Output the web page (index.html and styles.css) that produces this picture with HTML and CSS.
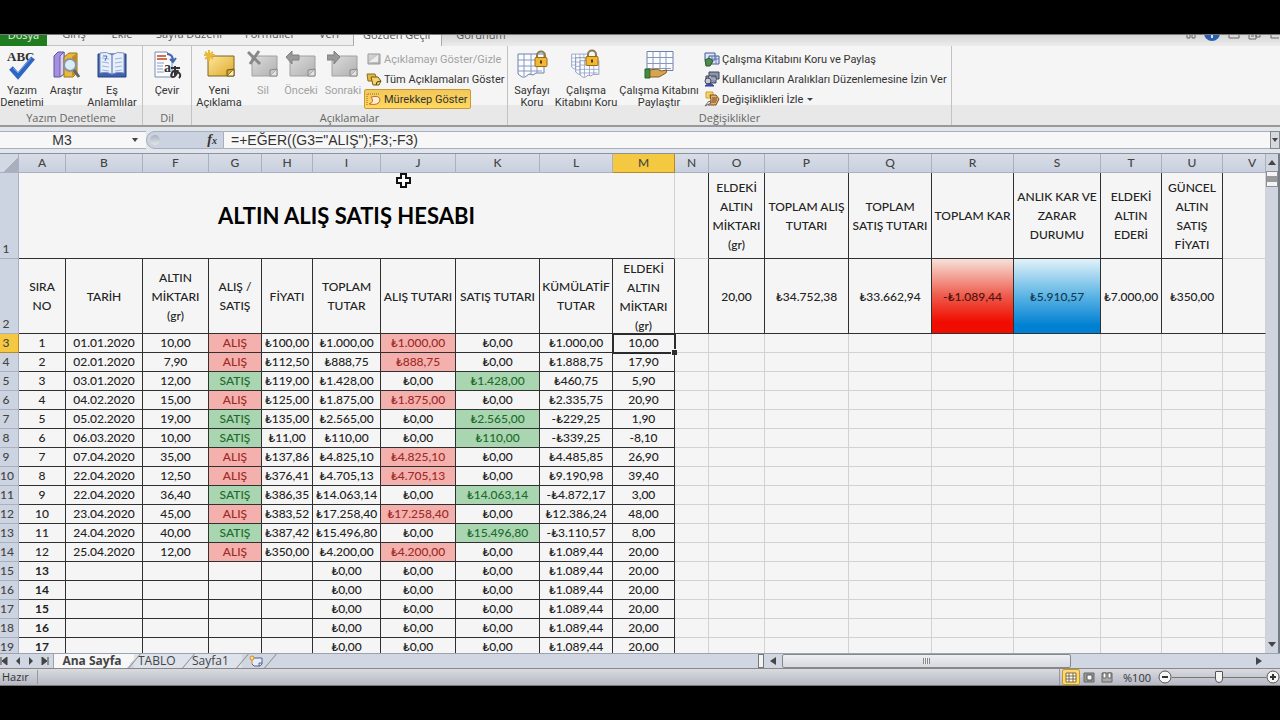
FILE: index.html
```html
<!DOCTYPE html>
<html lang="tr">
<head>
<meta charset="utf-8">
<title>Altın Alış Satış Hesabı</title>
<link rel="stylesheet" href="styles.css">
</head>
<body>
<svg class="defs" aria-hidden="true">
  <defs>
    <linearGradient id="note" x1="0" y1="0" x2="1" y2="1"><stop offset="0" stop-color="#ffe79a"/><stop offset="1" stop-color="#dba92c"/></linearGradient>
    <linearGradient id="grey" x1="0" y1="0" x2="1" y2="1"><stop offset="0" stop-color="#dcdcdc"/><stop offset="1" stop-color="#b0b0b0"/></linearGradient>
    <symbol id="greynote" viewBox="0 0 32 32"><path d="M5 7h25v20H5z" fill="url(#grey)" stroke="#a0a0a0"/><path d="M30 20l-7 7h7z" fill="#e4e4e4" stroke="#888"/><path d="M23 27v-6l7-1" fill="#c9c9c9" stroke="#888"/></symbol>
    <symbol id="grid" viewBox="0 0 28 25"><path d="M1 1h26v19h-8l-3 2-4-1-4 3H5l-4-3z" fill="#fbfcff" stroke="#6f80a8"/><path d="M1 7h26M1 13h26M1 18h24M7 1v22M14 1v20M20 1v19" stroke="#8798bd" fill="none"/></symbol>
    <symbol id="lock" viewBox="0 0 14 17"><path d="M3 8V5a4 4 0 0 1 8 0v3" fill="none" stroke="#8a7b52" stroke-width="2"/><rect x="1" y="7" width="12" height="9" rx="1" fill="#f2b834" stroke="#9b6b10"/><path d="M7 10v3" stroke="#56390a" stroke-width="2"/></symbol>
  </defs>
</svg>
<div class="app">
  <nav class="tabs">
    <button class="tab file">Dosya</button>
    <div class="plain">
      <button class="tab w54">Giriş</button>
      <button class="tab w42">Ekle</button>
      <button class="tab w92">Sayfa Düzeni</button>
      <button class="tab w70">Formüller</button>
      <button class="tab w48">Veri</button>
    </div>
    <button class="tab active">Gözden Geçir</button>
    <button class="tab last">Görünüm</button>
    <svg class="winicons" width="96" height="12" viewBox="0 0 96 12"><path d="M3 0v4h3V1M11 0v4H8V1" fill="none" stroke="#666"/><circle cx="28" cy="-1" r="8" fill="#2a5fae"/><path d="M28 0v4" stroke="#cfe2ff" stroke-width="2"/><path d="M45 0v4h10V0M65 0v5h7V0M72 0v3h4V0M67 2h3M87 0v4h8" fill="none" stroke="#666" stroke-width="1"/></svg>
  </nav>

  <section class="ribbon">
    <div class="group g1">
      <div class="tools">
        <button class="big"><svg width="32" height="32" viewBox="0 0 32 32"><text x="1" y="12" class="abc">ABC</text><path d="M5 19l7 8L27 9" fill="none" stroke="#2f66c4" stroke-width="5"/><path d="M7 19l5 5L25 9" fill="none" stroke="#6e9fe8" stroke-width="1"/></svg><span>Yazım<br>Denetimi</span></button>
        <button class="big"><svg width="32" height="32" viewBox="0 0 32 32"><path d="M4 7l4-4h6v22l-4 3H4z" fill="#a48fe0" stroke="#5f55a0"/><path d="M10 7l4-4v22l-4 3z" fill="#d9d0f4" stroke="#6a5fae"/><path d="M14 8l5-4h8v20l-4 4h-9z" fill="#e6b93e" stroke="#9a7415"/><path d="M22 8l5-4v20l-5 3z" fill="#c28d1f"/><circle cx="20" cy="16" r="6" fill="#d9edf8" stroke="#8b949e" stroke-width="2"/><path d="M24 21l5 7" stroke="#666" stroke-width="3"/></svg><span>Araştır</span></button>
        <button class="big"><svg width="32" height="32" viewBox="0 0 32 32"><path d="M2 5h28v23H2z" fill="#3f62ad" stroke="#263f7d"/><path d="M4 4q7-2 12 2v19q-6-3-12-1zM28 4q-7-2-12 2v19q6-3 12-1z" fill="#e9f0fb" stroke="#7b92c5"/><path d="M6 9l7 1M6 13l7 1M6 17l7 1M6 21l7 1M19 10l7-1M19 14l7-1M19 18l7-1M19 22l7-1" stroke="#9bb3dd"/><path d="M7 7h4l-2 5" fill="none" stroke="#506fb4"/></svg><span>Eş<br>Anlamlılar</span></button>
      </div>
      <h2>Yazım Denetleme</h2>
    </div>
    <div class="group g2">
      <div class="tools">
        <button class="big"><svg width="32" height="32" viewBox="0 0 32 32"><path d="M4 3h12l5 5v20H4z" fill="#fafbff" stroke="#7d8cae"/><path d="M6 7h9M6 10h10" stroke="#d1714e" stroke-width="2"/><path d="M6 14h7M6 17h6M6 20h6M6 23h7" stroke="#8c9cc0"/><path d="M16 5q6 0 6 7M19 10l3 3 3-4" fill="none" stroke="#4268b4" stroke-width="2"/><text x="13" y="23" class="tr">a</text><path d="M20 19h9M24 17v10M27 21q-2 7-5 7t-1-4 6-1 1 6" fill="none" stroke="#333" stroke-width="2"/></svg><span>Çevir</span></button>
      </div>
      <h2>Dil</h2>
    </div>
    <div class="group g3">
      <div class="tools">
        <button class="big wide"><svg width="32" height="32" viewBox="0 0 32 32"><path d="M5 7h26v20H5z" fill="url(#note)" stroke="#7d6420"/><path d="M31 20l-7 7h7z" fill="#fff1ba" stroke="#6d5415"/><path d="M24 27v-6l7-1" fill="#d3a239" stroke="#6d5415"/><path d="M6 1v11M1 6h11M2 3l8 7M10 3l-8 7" stroke="#e9b93a" stroke-width="2"/></svg><span>Yeni<br>Açıklama</span></button>
        <button class="big off w34" disabled><svg width="32" height="32" viewBox="0 0 32 32"><use href="#greynote" width="32" height="32"/><path d="M1 3l12 12M12 2L3 15" stroke="#888" stroke-width="3"/></svg><span>Sil</span></button>
        <button class="big off w42" disabled><svg width="32" height="32" viewBox="0 0 32 32"><use href="#greynote" width="32" height="32"/><path d="M1 8l6-6v4h7v5H7v4z" fill="#999" stroke="#808080"/></svg><span>Önceki</span></button>
        <button class="big off w42" disabled><svg width="32" height="32" viewBox="0 0 32 32"><use href="#greynote" width="32" height="32"/><path d="M13 8L7 2v4H0v5h7v4z" fill="#999" stroke="#808080"/></svg><span>Sonraki</span></button>
        <div class="stack">
          <button class="small off" disabled><svg width="16" height="16" viewBox="0 0 16 16"><path d="M2 3h12v10H2z" fill="url(#grey)" stroke="#999"/><path d="M3 11L12 4v7z" fill="#eee"/></svg>Açıklamayı Göster/Gizle</button>
          <button class="small"><svg width="16" height="16" viewBox="0 0 16 16"><path d="M1 3h8l2 5-3 2H2z" fill="#e5ba43" stroke="#8a6d1d"/><path d="M5 6h7l3 4-2 4H7z" fill="#f4d36c" stroke="#755b16"/><path d="M15 10l-4 1-1 3" fill="none" stroke="#4c3c10"/></svg>Tüm Açıklamaları Göster</button>
          <button class="small pressed"><svg width="16" height="16" viewBox="0 0 16 16"><path d="M1 14V3h13" fill="none" stroke="#8a6a25" stroke-dasharray="1 1"/><path d="M5 6q9-2 9 3-1 6-11 4 6-2 2-7z" fill="#fff0cf" stroke="#c06a31"/></svg>Mürekkep Göster</button>
        </div>
      </div>
      <h2>Açıklamalar</h2>
    </div>
    <div class="group g4">
      <div class="tools">
        <button class="big w48"><svg width="32" height="32" viewBox="0 0 32 32"><use href="#grid" x="1" y="4" width="28" height="25"/><use href="#lock" x="18" y="1" width="14" height="18"/></svg><span>Sayfayı<br>Koru</span></button>
        <button class="big w60"><svg width="32" height="32" viewBox="0 0 32 32"><use href="#grid" x="1" y="4" width="18" height="17"/><use href="#grid" x="5" y="8" width="20" height="18"/><use href="#grid" x="9" y="11" width="21" height="18"/><use href="#lock" x="15" y="0" width="14" height="18"/></svg><span>Çalışma<br>Kitabını Koru</span></button>
        <button class="big w86"><svg width="32" height="32" viewBox="0 0 32 32"><use href="#grid" x="3" y="1" width="28" height="26"/><path d="M2 20h5v9H2z" fill="#3e8e3b" stroke="#27632a"/><path d="M7 21l7-1 4 2 6-1-1 3-7 4H7z" fill="#d7a54f" stroke="#815f24"/></svg><span>Çalışma Kitabını<br>Paylaştır</span></button>
        <div class="stack">
          <button class="small"><svg width="16" height="16" viewBox="0 0 16 16"><path d="M1 2h10v7H1zM5 5h10v8H5z" fill="#dbe6fa" stroke="#455d91"/><path d="M5 8h10M8 5v8M12 5v8" stroke="#6c82b5"/><path d="M1 9l4-2 4 3-3 5H2z" fill="#4b8b4b" stroke="#285a2b"/></svg>Çalışma Kitabını Koru ve Paylaş</button>
          <button class="small"><svg width="16" height="16" viewBox="0 0 16 16"><path d="M5 1h10v7H5zM2 5h10v7H2z" fill="#8c95ac" stroke="#3d4558"/><path d="M2 8h10M6 5v7" stroke="#dfe4f0"/><circle cx="4" cy="10" r="3" fill="#c8c8d4" stroke="#445"/><path d="M1 15q5-5 9 0z" fill="#4356b5" stroke="#2e3b87"/></svg>Kullanıcıların Aralıkları Düzenlemesine İzin Ver</button>
          <button class="small"><svg width="16" height="16" viewBox="0 0 16 16"><path d="M2 1h7v6H2z" fill="#f5d465" stroke="#d29f2e"/><path d="M6 4h6l3 4-3 6H4l3-5z" fill="#e7b06c" stroke="#7a4c22"/><path d="M8 7h5M8 9h5M7 11h5" stroke="#704522"/><path d="M1 15l4-5 2 2z" fill="#fff" stroke="#666"/></svg>Değişiklikleri İzle<i class="caret"></i></button>
        </div>
      </div>
      <h2>Değişiklikler</h2>
    </div>
  </section>

  <section class="formula">
    <div class="namebox"><input type="text" value="M3" aria-label="Ad kutusu"><button aria-label="Adlar"><i class="caret"></i></button></div>
    <div class="fx"><span class="knob"></span><button aria-label="İşlev ekle">f<small>x</small></button></div>
    <input class="expr" type="text" aria-label="Formül" value="=+EĞER((G3=&quot;ALIŞ&quot;);F3;-F3)">
    <button class="expand" aria-label="Genişlet"><i class="caret"></i></button>
  </section>

  <main class="sheet">
    <div class="viewport">
      <table>
        <colgroup>
          <col class="c-num"><col class="c-a"><col class="c-b"><col class="c-f"><col class="c-g"><col class="c-h"><col class="c-i"><col class="c-j"><col class="c-k"><col class="c-l"><col class="c-m"><col class="c-n"><col class="c-o"><col class="c-p"><col class="c-q"><col class="c-r"><col class="c-s"><col class="c-t"><col class="c-u"><col>
        </colgroup>
        <thead>
          <tr><th class="corner"></th><th>A</th><th>B</th><th>F</th><th>G</th><th>H</th><th>I</th><th>J</th><th>K</th><th>L</th><th class="sel">M</th><th>N</th><th>O</th><th>P</th><th>Q</th><th>R</th><th>S</th><th>T</th><th>U</th><th class="v">V</th></tr>
        </thead>
        <tbody id="rows">
          <tr class="r1"><th>1</th><td colspan="10" class="title">ALTIN ALIŞ SATIŞ HESABI</td><td class="gap"></td><td class="k">ELDEKİ<br>ALTIN<br>MİKTARI<br>(gr)</td><td class="k">TOPLAM ALIŞ<br>TUTARI</td><td class="k">TOPLAM<br>SATIŞ TUTARI</td><td class="k">TOPLAM KAR</td><td class="k">ANLIK KAR VE<br>ZARAR<br>DURUMU</td><td class="k">ELDEKİ<br>ALTIN<br>EDERİ</td><td class="k">GÜNCEL<br>ALTIN<br>SATIŞ<br>FİYATI</td><td></td></tr>
          <tr class="r2"><th>2</th><td class="k">SIRA<br>NO</td><td class="k">TARİH</td><td class="k">ALTIN<br>MİKTARI<br>(gr)</td><td class="k">ALIŞ /<br>SATIŞ</td><td class="k">FİYATI</td><td class="k">TOPLAM<br>TUTAR</td><td class="k">ALIŞ TUTARI</td><td class="k">SATIŞ TUTARI</td><td class="k">KÜMÜLATİF<br>TUTAR</td><td class="k"><div>ELDEKİ<br>ALTIN<br>MİKTARI<br>(gr)</div></td><td class="gap"></td><td class="k">20,00</td><td class="k">₺34.752,38</td><td class="k">₺33.662,94</td><td class="k loss">-₺1.089,44</td><td class="k gain">₺5.910,57</td><td class="k">₺7.000,00</td><td class="k">₺350,00</td><td></td></tr>
        </tbody>
      </table>
      <svg class="cursor" width="16" height="16" viewBox="0 0 16 16"><path d="M5 1h5v4h4v5h-4v4H5v-4H1V5h4z" fill="#fff" stroke="#111" stroke-width="2"/></svg>
    </div>
    <div class="vscroll"><i class="up"></i><span class="vthumb"></span><i class="down"></i></div>
  </main>

  <footer>
    <div class="sheetbar">
      <div class="navs">
        <button aria-label="İlk sayfa"><svg width="8" height="8" viewBox="0 0 8 8"><path d="M1 0v8M7 0v8L2 4z" fill="#444" stroke="#444" stroke-width="1"/></svg></button>
        <button aria-label="Önceki sayfa"><svg width="8" height="8" viewBox="0 0 8 8"><path d="M6 0v8L2 4z" fill="#444"/></svg></button>
        <button aria-label="Sonraki sayfa"><svg width="8" height="8" viewBox="0 0 8 8"><path d="M2 0v8l4-4z" fill="#444"/></svg></button>
        <button aria-label="Son sayfa"><svg width="8" height="8" viewBox="0 0 8 8"><path d="M1 0v8l5-4zM7 0v8" fill="#444" stroke="#444" stroke-width="1"/></svg></button>
      </div>
      <button class="st current">Ana Sayfa</button>
      <button class="st t2">TABLO</button>
      <button class="st t2">Sayfa1</button>
      <button class="st add" aria-label="Sayfa ekle"><svg width="16" height="12" viewBox="0 0 16 12"><path d="M4 3h10v6l-2 2H6l-2-2" fill="#e9eefb" stroke="#4d6191"/><path d="M14 8h-3v3" fill="none" stroke="#4d6191"/><circle cx="4" cy="3" r="2" fill="#ffe7a3" stroke="#d08a1d"/><path d="M4 5v4" stroke="#d08a1d"/></svg></button>
      <span class="fill"></span>
      <div class="hscroll"><span class="split"></span><i class="left"></i><div class="htrack"><span class="hthumb"><i></i></span></div><i class="right"></i></div>
    </div>
    <div class="status">
      <span class="ready">Hazır</span>
      <span class="fill"></span>
      <div class="views">
        <button class="on" aria-label="Normal"><svg width="12" height="11" viewBox="0 0 12 11"><path d="M1 1h10v9H1zM1 4h10M1 7h10M4 1v9M8 1v9" fill="#fff" stroke="#7a6a3a"/></svg></button>
        <button aria-label="Sayfa düzeni"><svg width="12" height="11" viewBox="0 0 12 11"><path d="M1 1h10v9H1z" fill="#999" stroke="#666"/><path d="M4 3h5v5H4z" fill="#fff" stroke="#555"/></svg></button>
        <button aria-label="Sayfa sonu önizleme"><svg width="12" height="11" viewBox="0 0 12 11"><path d="M1 1h10v9H1z" fill="#aaa" stroke="#666"/><path d="M2 1h3v5H2zM7 1h3v5H7z" fill="#fff" stroke="#666"/></svg></button>
      </div>
      <span class="pct">%100</span>
      <button class="round" aria-label="Uzaklaştır"><svg width="14" height="14" viewBox="0 0 14 14"><circle cx="7" cy="7" r="6" fill="#f6f6f6" stroke="#555"/><path d="M4 7h6" stroke="#333" stroke-width="2"/></svg></button>
      <input class="zoom" type="range" min="0" max="100" value="50" aria-label="Yakınlaştırma">
      <button class="round" aria-label="Yakınlaştır"><svg width="14" height="14" viewBox="0 0 14 14"><circle cx="7" cy="7" r="6" fill="#f6f6f6" stroke="#555"/><path d="M4 7h6M7 4v6" stroke="#333" stroke-width="2"/></svg></button>
    </div>
  </footer>
</div>
<script src="rows.js"></script>
</body>
</html>
```
FILE: rows.js
```js
const Z = "₺0,00";
const data = [
  ["01.01.2020", "10,00", "ALIŞ", "₺100,00", "₺1.000,00", "₺1.000,00", "10,00"],
  ["02.01.2020", "7,90", "ALIŞ", "₺112,50", "₺888,75", "₺1.888,75", "17,90"],
  ["03.01.2020", "12,00", "SATIŞ", "₺119,00", "₺1.428,00", "₺460,75", "5,90"],
  ["04.02.2020", "15,00", "ALIŞ", "₺125,00", "₺1.875,00", "₺2.335,75", "20,90"],
  ["05.02.2020", "19,00", "SATIŞ", "₺135,00", "₺2.565,00", "-₺229,25", "1,90"],
  ["06.03.2020", "10,00", "SATIŞ", "₺11,00", "₺110,00", "-₺339,25", "-8,10"],
  ["07.04.2020", "35,00", "ALIŞ", "₺137,86", "₺4.825,10", "₺4.485,85", "26,90"],
  ["22.04.2020", "12,50", "ALIŞ", "₺376,41", "₺4.705,13", "₺9.190,98", "39,40"],
  ["22.04.2020", "36,40", "SATIŞ", "₺386,35", "₺14.063,14", "-₺4.872,17", "3,00"],
  ["23.04.2020", "45,00", "ALIŞ", "₺383,52", "₺17.258,40", "₺12.386,24", "48,00"],
  ["24.04.2020", "40,00", "SATIŞ", "₺387,42", "₺15.496,80", "-₺3.110,57", "8,00"],
  ["25.04.2020", "12,00", "ALIŞ", "₺350,00", "₺4.200,00", "₺1.089,44", "20,00"]
];
while (data.length < 17) data.push(["", "", "", "", Z, "₺1.089,44", "20,00"]);

const body = document.getElementById("rows");
data.forEach(([date, qty, kind, price, total, sum, left], i) => {
  const buy = kind === "ALIŞ", sell = kind === "SATIŞ";
  const tone = buy ? "buy" : sell ? "sell" : "";
  const cells = [
    [i + 1, i > 11 ? "bold" : ""], [date], [qty], [kind, tone], [price], [total],
    [buy ? total : Z, buy ? "buy" : ""], [sell ? total : Z, sell ? "sell" : ""],
    [sum], [left, i === 0 ? "picked" : ""]
  ];
  const tr = document.createElement("tr");
  const th = document.createElement("th");
  th.textContent = i + 3;
  if (i === 0) th.className = "sel";
  tr.append(th);
  cells.forEach(([text, cls]) => {
    const td = document.createElement("td");
    td.className = "k " + (cls || "");
    td.textContent = text;
    tr.append(td);
  });
  for (let n = 0; n < 9; n++) tr.append(document.createElement("td"));
  body.append(tr);
});
```
FILE: styles.css
```css
* { box-sizing: border-box; }
body { margin: 0; background: #000; }
button, input { font: inherit; color: inherit; border: 0; background: none; padding: 0; margin: 0; border-radius: 0; outline: 0; }
.defs { position: absolute; width: 0; height: 0; }
.app { display: flex; flex-direction: column; height: 100vh; padding: 34px 0; font-family: "Open Sans", "Noto Sans", sans-serif; font-size: 11px; color: #333; }

.tabs { display: flex; align-items: flex-end; height: 12px; overflow: hidden; background: linear-gradient(#d6d6d6, #ececec); border-top: 1px solid #777; flex: none; }
.tab { height: 24px; padding-top: 2px; line-height: 22px; white-space: nowrap; text-align: center; color: #555; flex: none; }
.file { width: 47px; background: #1f7d1f; color: #e5f3e5; }
.plain { display: flex; background: #eeeeee; border-right: 1px solid #aaa; border-bottom: 1px solid #c4c4c4; }
.active { width: 88px; background: #f5f5f5; border-right: 1px solid #aaa; }
.last { width: 78px; }
.winicons { margin-left: auto; flex: none; }
.w34 { width: 34px; } .w42 { width: 42px; } .w48 { width: 48px; } .w54 { width: 54px; } .w60 { width: 60px; }
.w70 { width: 70px; } .w86 { width: 86px; } .w92 { width: 92px; }

.ribbon { display: flex; height: 81px; flex: none; background: linear-gradient(#f5f5f5 0 59px, #e8e8e8 59px); border-bottom: 2px solid #999; }
.group { display: flex; flex-direction: column; border-right: 1px solid #c2c2c2; flex: none; }
.g1 { width: 143px; } .g2 { width: 49px; } .g3 { width: 316px; } .g4 { width: 444px; }
.group h2 { margin: 0; font-size: 11px; font-weight: 400; line-height: 14px; text-align: center; color: #666; }
.tools { display: flex; align-items: flex-start; padding-top: 3px; height: 66px; font-family: Roboto, "Open Sans", sans-serif; }
.big { display: flex; flex-direction: column; align-items: center; flex: none; line-height: 12px; white-space: nowrap; }
.big svg { margin-bottom: 4px; }
.g1 .big { width: 44px; } .g1 .big:last-child { width: 48px; }
.g2 .big { width: 48px; }
.g3 .wide { width: 54px; }
.off { color: #a2a2a2; }
.abc { font: bold 13px "Liberation Serif", serif; fill: #333; }
.tr { font: bold 14px "Liberation Serif", serif; fill: #333; }
.stack { display: flex; flex-direction: column; align-items: flex-start; }
.small { display: flex; align-items: center; gap: 2px; height: 20px; padding: 0 2px 0 1px; white-space: nowrap; border: 1px solid transparent; }
.pressed { background: linear-gradient(#f3c75a, #ffd95d); border-color: #c79a34; border-radius: 2px; }
.caret { display: inline-block; border: 3px solid transparent; border-top: 4px solid #444; border-bottom: 0; }
.small .caret { margin-left: 2px; border-top-width: 3px; }

.formula { display: flex; height: 27px; flex: none; padding: 4px 0 4px; background: #e1e5ec; border-bottom: 1px solid #8c939f; font-family: "Liberation Sans", Arial, sans-serif; font-size: 14px; color: #333; }
.namebox { display: flex; width: 146px; background: #f7f7f7; border: 1px solid #a8afbb; border-width: 1px 0; }
.namebox input { width: 124px; text-align: center; }
.namebox button { display: flex; align-items: center; justify-content: center; width: 26px; }
.fx { display: flex; align-items: center; justify-content: space-between; width: 78px; padding: 0 6px 0 3px; background: #ccd3e0; border: 1px solid #a8afbb; border-radius: 10px 0 0 10px; }
.fx button { font: italic bold 14px "Liberation Serif", serif; }
.fx small { font-size: 10px; }
.knob { width: 10px; height: 10px; border-radius: 5px; background: linear-gradient(#aab1bd, #e2e6ee); }
.expr { flex: 1; min-width: 0; padding-left: 7px; background: #f7f7f7; border: 1px solid #a8afbb; border-width: 1px 0; }
.expand { display: flex; align-items: center; justify-content: center; width: 10px; background: #d5d9e0; border: 1px solid #888; }

.sheet { display: flex; flex: 1; min-height: 0; }
.viewport { position: relative; flex: 1; min-width: 0; overflow: hidden; background: #f5f5f5; }
table { width: 100%; table-layout: fixed; border-collapse: separate; border-spacing: 0; font-family: Lato, "DejaVu Sans", sans-serif; font-size: 12px; font-weight: 500; color: #222; }
.c-num { width: 19px; } .c-a { width: 47px; } .c-b { width: 77px; } .c-f { width: 66px; } .c-g { width: 53px; }
.c-h { width: 51px; } .c-i { width: 68px; } .c-j { width: 75px; } .c-k { width: 84px; } .c-l { width: 73px; }
.c-m { width: 62px; } .c-n { width: 34px; } .c-o { width: 56px; } .c-p { width: 84px; } .c-q { width: 83px; }
.c-r { width: 82px; } .c-s { width: 87px; } .c-t { width: 61px; } .c-u { width: 61px; }
th, td { height: 19px; padding: 0; line-height: 18px; text-align: center; white-space: nowrap; border: 0 solid #d2d2d2; border-width: 0 1px 1px 0; }
th { font-weight: 500; color: #444; background: #cdd4e1; border-color: #a9b1c0; }
thead th { background: linear-gradient(#d8dde7, #c9d0de); }
tbody th { padding-right: 6px; vertical-align: bottom; }
.corner { background: linear-gradient(135deg, #d3d9e4 60%, #a9b0bd 60%); }
th.sel { background: #f5c842; border-color: #b58a2a; }
.v { padding-left: 16px; }
.r1 td, .r1 th { height: 86px; line-height: 19px; }
.r2 td, .r2 th { height: 75px; line-height: 19px; }
.k { border-color: #303030; }
.k div { max-height: 74px; overflow: hidden; }
.title { font-size: 22px; font-weight: 700; color: #000; border-bottom-color: #303030; }
.gap { border-right-color: #303030; }
.r1 .gap { border-bottom-color: #d2d2d2; }
.r2 td { border-bottom-color: #303030; }
.bold { font-weight: 700; }
.buy { background: #f4b0ac; color: #9c2a28; }
.sell { background: #a9d5b1; color: #1d6b2a; }
.loss { background: linear-gradient(#f6e2da, #ee5a4a 50%, #f00c00 85%); color: #4a1210; }
.gain { background: linear-gradient(#e2f2fa, #5bb4e4 50%, #0080d2 90%); color: #12384f; }
.picked { position: relative; outline: 2px solid #2c2c2c; outline-offset: -1px; }
.picked::after { content: ""; position: absolute; right: -3px; bottom: -3px; width: 5px; height: 5px; background: #2c2c2c; border: 1px solid #f5f5f5; border-width: 1px 0 0 1px; }
.cursor { position: absolute; left: 396px; top: 19px; }

.vscroll { display: flex; flex-direction: column; align-items: center; width: 14px; padding: 6px 0; background: #cfd4de; border-right: 2px solid #777b85; flex: none; }
.up { border: 4px solid transparent; border-top: 0; border-bottom: 5px solid #444; margin-bottom: 6px; }
.vthumb { width: 12px; height: 16px; background: linear-gradient(#f3f3f3 4px, #999 4px 10px, #f3f3f3 10px); border: 1px solid #8b8f99; }
.down { border: 4px solid transparent; border-bottom: 0; border-top: 5px solid #444; margin-top: auto; }

footer { flex: none; }
.sheetbar { display: flex; height: 16px; background: #d0d7e3; border-top: 1px solid #9ba3b1; border-bottom: 1px solid #888; font-size: 12px; color: #444; }
.navs { display: flex; width: 54px; justify-content: space-between; align-items: center; padding: 0 4px 0 0; border-right: 1px solid #9ba3b1; }
.navs button { display: flex; }
.st { position: relative; line-height: 14px; }
.st::after { content: ""; position: absolute; z-index: 1; right: -1px; top: 0; bottom: 0; border-right: 1px solid #888; transform: skewX(-40deg); }
.current { width: 80px; padding-right: 4px; font-weight: 700; background: linear-gradient(130deg, #f7f7f7 92%, #d0d7e3 92%); }
.t2 { width: 54px; padding-left: 4px; text-align: left; background: #dde2eb; }
.add { display: flex; align-items: center; justify-content: center; width: 28px; }
.fill { flex: 1; }
.hscroll { display: flex; align-items: center; width: 522px; flex: none; padding-right: 18px; }
.split { width: 6px; height: 14px; border: 1px solid #777; background: #f3f3f3; }
.left { margin: 0 6px; border: 4px solid transparent; border-left: 0; border-right: 6px solid #444; }
.right { border: 4px solid transparent; border-right: 0; border-left: 6px solid #444; }
.htrack { flex: 1; height: 14px; }
.hthumb { display: flex; align-items: center; justify-content: center; width: 61%; height: 14px; background: linear-gradient(#eceef2, #d6dae1); border: 1px solid #888; border-radius: 2px; }
.hthumb i { width: 7px; height: 6px; background: repeating-linear-gradient(90deg, #888 0 1px, #eee 1px 2px); }
.status { display: flex; align-items: center; height: 17px; background: linear-gradient(#d9dbe0, #b6b8c4); border-bottom: 1px solid #777; }
.ready { padding: 0 8px 0 2px; border-right: 1px solid #999; line-height: 14px; }
.views { display: flex; padding-left: 2px; border-left: 1px solid #999; }
.views button { display: flex; align-items: center; justify-content: center; width: 18px; height: 16px; }
.views .on { background: #ffd870; border: 1px solid #c8952d; border-radius: 2px; }
.pct { width: 42px; text-align: center; }
.round { display: flex; }
.zoom { appearance: none; width: 94px; height: 14px; background: linear-gradient(#777, #777) center / 100% 1px no-repeat; }
.zoom::-webkit-slider-thumb { appearance: none; width: 8px; height: 12px; background: #f4f4f4; border: 1px solid #555; border-radius: 1px 1px 4px 4px; }
```
